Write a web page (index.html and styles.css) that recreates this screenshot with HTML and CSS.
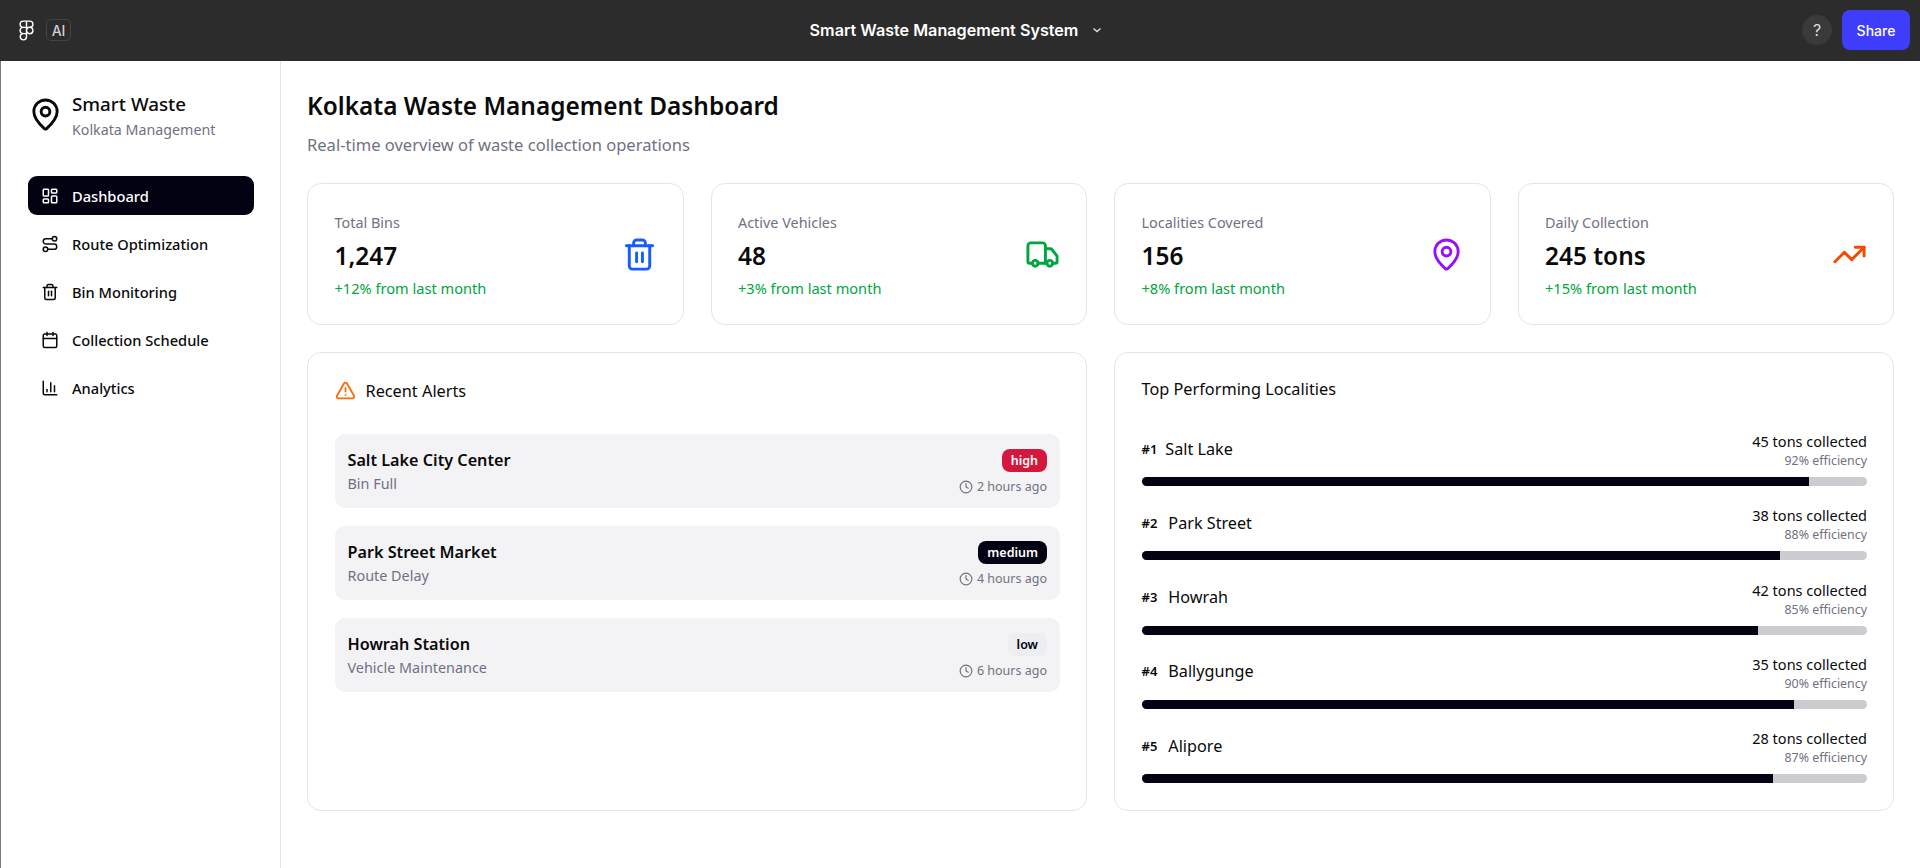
FILE: index.html
```html
<!DOCTYPE html>
<html lang="en">
<head>
  <meta charset="UTF-8">
  <meta name="viewport" content="width=device-width, initial-scale=1.0">
  <title>Smart Waste Management System</title>
  <link rel="stylesheet" href="styles.css">
</head>
<body>
  <svg class="sprite" aria-hidden="true">
    <symbol id="i-pin" viewBox="0 0 24 24"><path d="M20 10c0 4.993-5.539 10.193-7.399 11.799a1 1 0 0 1-1.202 0C9.539 20.193 4 14.993 4 10a8 8 0 0 1 16 0"/><circle cx="12" cy="10" r="3"/></symbol>
    <symbol id="i-dash" viewBox="0 0 24 24"><rect x="3" y="3" width="7" height="9" rx="1"/><rect x="14" y="3" width="7" height="5" rx="1"/><rect x="14" y="12" width="7" height="9" rx="1"/><rect x="3" y="16" width="7" height="5" rx="1"/></symbol>
    <symbol id="i-route" viewBox="0 0 24 24"><circle cx="6" cy="19" r="3"/><path d="M9 19h8.5a3.5 3.5 0 0 0 0-7h-11a3.5 3.5 0 0 1 0-7H15"/><circle cx="18" cy="5" r="3"/></symbol>
    <symbol id="i-trash" viewBox="0 0 24 24"><path d="M3 6h18"/><path d="M19 6v14c0 1-1 2-2 2H7c-1 0-2-1-2-2V6"/><path d="M8 6V4c0-1 1-2 2-2h4c1 0 2 1 2 2v2"/><path d="M10 11v6"/><path d="M14 11v6"/></symbol>
    <symbol id="i-cal" viewBox="0 0 24 24"><path d="M8 2v4"/><path d="M16 2v4"/><rect x="3" y="4" width="18" height="18" rx="2"/><path d="M3 10h18"/></symbol>
    <symbol id="i-chart" viewBox="0 0 24 24"><path d="M3 3v16a2 2 0 0 0 2 2h16"/><path d="M18 17V9"/><path d="M13 17V5"/><path d="M8 17v-3"/></symbol>
    <symbol id="i-truck" viewBox="0 0 24 24"><path d="M14 18V6a2 2 0 0 0-2-2H4a2 2 0 0 0-2 2v11a1 1 0 0 0 1 1h2"/><path d="M15 18H9"/><path d="M19 18h2a1 1 0 0 0 1-1v-3.65a1 1 0 0 0-.22-.624l-3.48-4.35A1 1 0 0 0 17.52 8H14"/><circle cx="17" cy="18" r="2"/><circle cx="7" cy="18" r="2"/></symbol>
    <symbol id="i-trend" viewBox="0 0 24 24"><path d="M16 7h6v6"/><path d="m22 7-8.5 8.5-5-5L2 17"/></symbol>
    <symbol id="i-alert" viewBox="0 0 24 24"><path d="m21.73 18-8-14a2 2 0 0 0-3.48 0l-8 14A2 2 0 0 0 4 21h16a2 2 0 0 0 1.73-3"/><path d="M12 9v4"/><path d="M12 17h.01"/></symbol>
    <symbol id="i-clock" viewBox="0 0 24 24"><circle cx="12" cy="12" r="10"/><path d="M12 6v6l4 2"/></symbol>
  </svg>

  <header class="topbar">
    <div class="topbar-left">
      <svg class="figma-logo" viewBox="0 0 16 22"><path d="M8 1H4.5a3.33 3.33 0 0 0 0 6.67H8zM8 1h3.5a3.33 3.33 0 0 1 0 6.67H8zM8 7.67H4.500a3.33 3.33 0 0 0 0 6.66H8zM8 11a3.33 3.33 0 1 0 6.830 0a3.33 3.33 0 1 0-6.830 0zM8 14.330H4.500a3.33 3.33 0 1 0 3.500 3.340z"/></svg>
      <span class="ai-chip">AI</span>
    </div>
    <div class="topbar-title">
      <span>Smart Waste Management System</span>
      <svg class="caret" viewBox="0 0 10 6"><path d="M1.500 1.500 5 4.500l3.500-3"/></svg>
    </div>
    <div class="topbar-right">
      <span class="help">?</span>
      <span class="share">Share</span>
    </div>
  </header>

  <div class="shell">
    <aside class="sidebar">
      <div class="brand">
        <svg class="icon icon-lg"><use href="#i-pin"/></svg>
        <div class="brand-text">
          <div class="brand-name">Smart Waste</div>
          <div class="brand-sub">Kolkata Management</div>
        </div>
      </div>
      <nav class="nav">
        <a class="nav-item active"><svg class="icon"><use href="#i-dash"/></svg>Dashboard</a>
        <a class="nav-item"><svg class="icon"><use href="#i-route"/></svg>Route Optimization</a>
        <a class="nav-item"><svg class="icon"><use href="#i-trash"/></svg>Bin Monitoring</a>
        <a class="nav-item"><svg class="icon"><use href="#i-cal"/></svg>Collection Schedule</a>
        <a class="nav-item"><svg class="icon"><use href="#i-chart"/></svg>Analytics</a>
      </nav>
    </aside>

    <main class="main">
      <h1>Kolkata Waste Management Dashboard</h1>
      <p class="subtitle">Real-time overview of waste collection operations</p>

      <section class="stats">
        <div class="card stat">
          <div>
            <div class="stat-label">Total Bins</div>
            <div class="stat-value">1,247</div>
            <div class="stat-change">+12% from last month</div>
          </div>
          <svg class="icon icon-lg blue"><use href="#i-trash"/></svg>
        </div>
        <div class="card stat">
          <div>
            <div class="stat-label">Active Vehicles</div>
            <div class="stat-value">48</div>
            <div class="stat-change">+3% from last month</div>
          </div>
          <svg class="icon icon-lg green"><use href="#i-truck"/></svg>
        </div>
        <div class="card stat">
          <div>
            <div class="stat-label">Localities Covered</div>
            <div class="stat-value">156</div>
            <div class="stat-change">+8% from last month</div>
          </div>
          <svg class="icon icon-lg purple"><use href="#i-pin"/></svg>
        </div>
        <div class="card stat">
          <div>
            <div class="stat-label">Daily Collection</div>
            <div class="stat-value">245 tons</div>
            <div class="stat-change">+15% from last month</div>
          </div>
          <svg class="icon icon-lg orange"><use href="#i-trend"/></svg>
        </div>
      </section>

      <section class="panels">
        <div class="card panel">
          <h2 class="panel-title title-alerts"><svg class="icon icon-alert"><use href="#i-alert"/></svg>Recent Alerts</h2>
          <div class="alerts">
            <div class="alert">
              <div>
                <div class="alert-name">Salt Lake City Center</div>
                <div class="alert-type">Bin Full</div>
              </div>
              <div class="alert-meta">
                <span class="badge badge-high">high</span>
                <span class="alert-time"><svg class="icon icon-clock"><use href="#i-clock"/></svg>2 hours ago</span>
              </div>
            </div>
            <div class="alert">
              <div>
                <div class="alert-name">Park Street Market</div>
                <div class="alert-type">Route Delay</div>
              </div>
              <div class="alert-meta">
                <span class="badge badge-medium">medium</span>
                <span class="alert-time"><svg class="icon icon-clock"><use href="#i-clock"/></svg>4 hours ago</span>
              </div>
            </div>
            <div class="alert">
              <div>
                <div class="alert-name">Howrah Station</div>
                <div class="alert-type">Vehicle Maintenance</div>
              </div>
              <div class="alert-meta">
                <span class="badge badge-low">low</span>
                <span class="alert-time"><svg class="icon icon-clock"><use href="#i-clock"/></svg>6 hours ago</span>
              </div>
            </div>
          </div>
        </div>

        <div class="card panel">
          <h2 class="panel-title">Top Performing Localities</h2>
          <div class="localities">
            <div class="locality">
              <div class="locality-head">
                <div class="locality-name"><span class="rank">#1</span>Salt Lake</div>
                <div class="locality-nums"><div class="tons">45 tons collected</div><div class="eff">92% efficiency</div></div>
              </div>
              <div class="track"><div class="fill" style="width: 92%"></div></div>
            </div>
            <div class="locality">
              <div class="locality-head">
                <div class="locality-name"><span class="rank">#2</span>Park Street</div>
                <div class="locality-nums"><div class="tons">38 tons collected</div><div class="eff">88% efficiency</div></div>
              </div>
              <div class="track"><div class="fill" style="width: 88%"></div></div>
            </div>
            <div class="locality">
              <div class="locality-head">
                <div class="locality-name"><span class="rank">#3</span>Howrah</div>
                <div class="locality-nums"><div class="tons">42 tons collected</div><div class="eff">85% efficiency</div></div>
              </div>
              <div class="track"><div class="fill" style="width: 85%"></div></div>
            </div>
            <div class="locality">
              <div class="locality-head">
                <div class="locality-name"><span class="rank">#4</span>Ballygunge</div>
                <div class="locality-nums"><div class="tons">35 tons collected</div><div class="eff">90% efficiency</div></div>
              </div>
              <div class="track"><div class="fill" style="width: 90%"></div></div>
            </div>
            <div class="locality">
              <div class="locality-head">
                <div class="locality-name"><span class="rank">#5</span>Alipore</div>
                <div class="locality-nums"><div class="tons">28 tons collected</div><div class="eff">87% efficiency</div></div>
              </div>
              <div class="track"><div class="fill" style="width: 87%"></div></div>
            </div>
          </div>
        </div>
      </section>
    </main>
  </div>
</body>
</html>
```

FILE: styles.css
```css
/* Reset */
* {
  margin: 0;
  padding: 0;
  box-sizing: border-box;
}

html, body {
  width: 100%;
  height: 100%;
  overflow: hidden;
}

body {
  background: #fff;
  color: #0a0a0a;
  font-family: "Noto Sans", "Open Sans", sans-serif;
}

.sprite {
  display: none;
}

/* Icons */
.icon {
  width: 18px;
  height: 18px;
  flex-shrink: 0;
  fill: none;
  stroke: currentColor;
  stroke-width: 2;
  stroke-linecap: round;
  stroke-linejoin: round;
}

.icon-lg {
  width: 35px;
  height: 35px;
}

.blue { color: #155dfc; }
.green { color: #00a63e; }
.purple { color: #9810fa; }
.orange { color: #f54900; }

/* Top bar */
.topbar {
  height: 61px;
  background: #2c2c2c;
  color: #fff;
  display: grid;
  grid-template-columns: 1fr auto 1fr;
  align-items: center;
  padding: 0 10px 1px 19px;
  font-family: Inter, "Noto Sans", sans-serif;
}

.topbar-left {
  display: flex;
  align-items: center;
  gap: 12px;
}

.figma-logo {
  width: 15px;
  height: 21px;
  fill: none;
  stroke: #fff;
  stroke-width: 1.5;
}

.ai-chip {
  width: 25px;
  height: 22px;
  border: 1px solid #444;
  border-radius: 5px;
  color: #d0d0d0;
  font-size: 14px;
  font-weight: 500;
  display: flex;
  align-items: center;
  justify-content: center;
}

.topbar-title {
  display: flex;
  align-items: center;
  gap: 14px;
  margin-right: 17px;
  font-size: 16.150px;
  font-weight: 600;
}

.caret {
  width: 10px;
  height: 6px;
  fill: none;
  stroke: #ddd;
  stroke-width: 1.4;
}

.topbar-right {
  display: flex;
  align-items: center;
  justify-content: flex-end;
  gap: 10px;
}

.help {
  width: 30px;
  height: 30px;
  border-radius: 50%;
  background: #3a3a3a;
  color: #ddd;
  font-size: 16px;
  display: flex;
  align-items: center;
  justify-content: center;
}

.share {
  width: 68px;
  height: 40px;
  border-radius: 8px;
  background: #3d3dfb;
  font-size: 14px;
  font-weight: 500;
  display: flex;
  align-items: center;
  justify-content: center;
}

/* Page body */
.shell {
  display: flex;
  height: 807px;
  border-left: 1px solid #7a7a7a;
}

.sidebar {
  width: 280px;
  flex-shrink: 0;
  border-right: 1px solid #e5e5e5;
  padding: 27px 26px 0 27px;
}

.brand {
  display: flex;
  gap: 9px;
  height: 50px;
  margin-bottom: 38px;
}

.brand .icon-lg {
  margin-top: 9px;
}

.brand-text {
  padding-top: 2px;
}

.brand-name {
  font-size: 18.800px;
  font-weight: 500;
  line-height: 28px;
}

.brand-sub {
  font-size: 14.250px;
  line-height: 24px;
  color: #717182;
}

.nav {
  display: flex;
  flex-direction: column;
  gap: 9px;
}

.nav-item {
  height: 39px;
  padding: 0 13px;
  border-radius: 9px;
  display: flex;
  align-items: center;
  gap: 13px;
  font-size: 14.650px;
  font-weight: 500;
}

.nav-item.active {
  background: #030213;
  color: #fff;
}

.main {
  flex: 1;
  min-width: 0;
  padding: 27px 26px 0 26px;
}

h1 {
  font-size: 24.400px;
  font-weight: 600;
  line-height: 35px;
}

.subtitle {
  margin-top: 10px;
  font-size: 16.550px;
  line-height: 24px;
  color: #717182;
}

/* Cards */
.card {
  background: #fff;
  border: 1px solid #e5e5e5;
  border-radius: 14px;
}

.stats {
  margin-top: 26px;
  display: grid;
  grid-template-columns: repeat(4, 1fr);
  gap: 27px;
}

.stat {
  height: 142px;
  padding: 0 26px 0 26.500px;
  display: flex;
  align-items: center;
  justify-content: space-between;
}

.stat > div {
  padding-top: 2px;
}

.stat-label {
  font-size: 14.400px;
  line-height: 20px;
  color: #717182;
}

.stat-value {
  margin-top: 7px;
  font-size: 24.400px;
  font-weight: 600;
  line-height: 32px;
}

.stat-change {
  margin-top: 6px;
  font-size: 14.600px;
  line-height: 20px;
  color: #00a63e;
}

.panels {
  margin-top: 27px;
  display: grid;
  grid-template-columns: 1fr 1fr;
  gap: 27px;
}

.panel {
  height: 459px;
  padding: 26px 26px 0 26.500px;
}

.panel-title {
  display: flex;
  align-items: center;
  gap: 10px;
  font-size: 16.300px;
  font-weight: 400;
  line-height: 20px;
}

.title-alerts {
  padding-top: 1px;
}

.icon-alert {
  width: 21px;
  height: 21px;
  color: #ff6900;
}

/* Alerts */
.alerts {
  margin-top: 33px;
  display: flex;
  flex-direction: column;
  gap: 18px;
}

.alert {
  height: 74px;
  padding: 0 13px;
  border-radius: 10px;
  background: #f3f3f5;
  display: flex;
  align-items: center;
  justify-content: space-between;
}

.alert-name {
  font-size: 16.200px;
  font-weight: 600;
  line-height: 24px;
}

.alert-type {
  font-size: 14.400px;
  line-height: 20px;
  color: #717182;
  margin-top: 2px;
}

.alert-meta {
  display: flex;
  flex-direction: column;
  align-items: flex-end;
  gap: 5px;
  padding-top: 4px;
}

.badge {
  height: 23px;
  padding: 0 9px;
  border-radius: 8px;
  font-size: 12.500px;
  font-weight: 600;
  display: flex;
  align-items: center;
}

.badge-high { background: #d4183d; color: #fff; }
.badge-medium { background: #030213; color: #fff; }
.badge-low { background: #eceef2; color: #030213; }

.alert-time {
  display: flex;
  align-items: center;
  gap: 4px;
  font-size: 12.500px;
  line-height: 20px;
  color: #717182;
}

.icon-clock {
  width: 14px;
  height: 14px;
}

/* Localities */
.localities {
  margin-top: 32px;
  display: flex;
  flex-direction: column;
  gap: 19.300px;
}

.locality-head {
  display: flex;
  align-items: center;
  justify-content: space-between;
  margin-bottom: 7px;
}

.locality-name {
  font-size: 16.200px;
  line-height: 24px;
  margin-bottom: 4px;
  display: flex;
  align-items: center;
  gap: 11px;
}

/* the 1 glyph sits narrower in the reference */
.locality:first-child .locality-name {
  gap: 8px;
}

.rank {
  font-size: 13px;
  font-weight: 600;
}

.locality-nums {
  text-align: right;
}

.tons {
  font-size: 14.500px;
  line-height: 20px;
}

.eff {
  font-size: 12.400px;
  line-height: 18px;
  margin-top: 1px;
  color: #717182;
}

.track {
  height: 9px;
  border-radius: 5px;
  background: #cbcbd0;
  overflow: hidden;
}

.fill {
  height: 100%;
  background: #030213;
}
```
